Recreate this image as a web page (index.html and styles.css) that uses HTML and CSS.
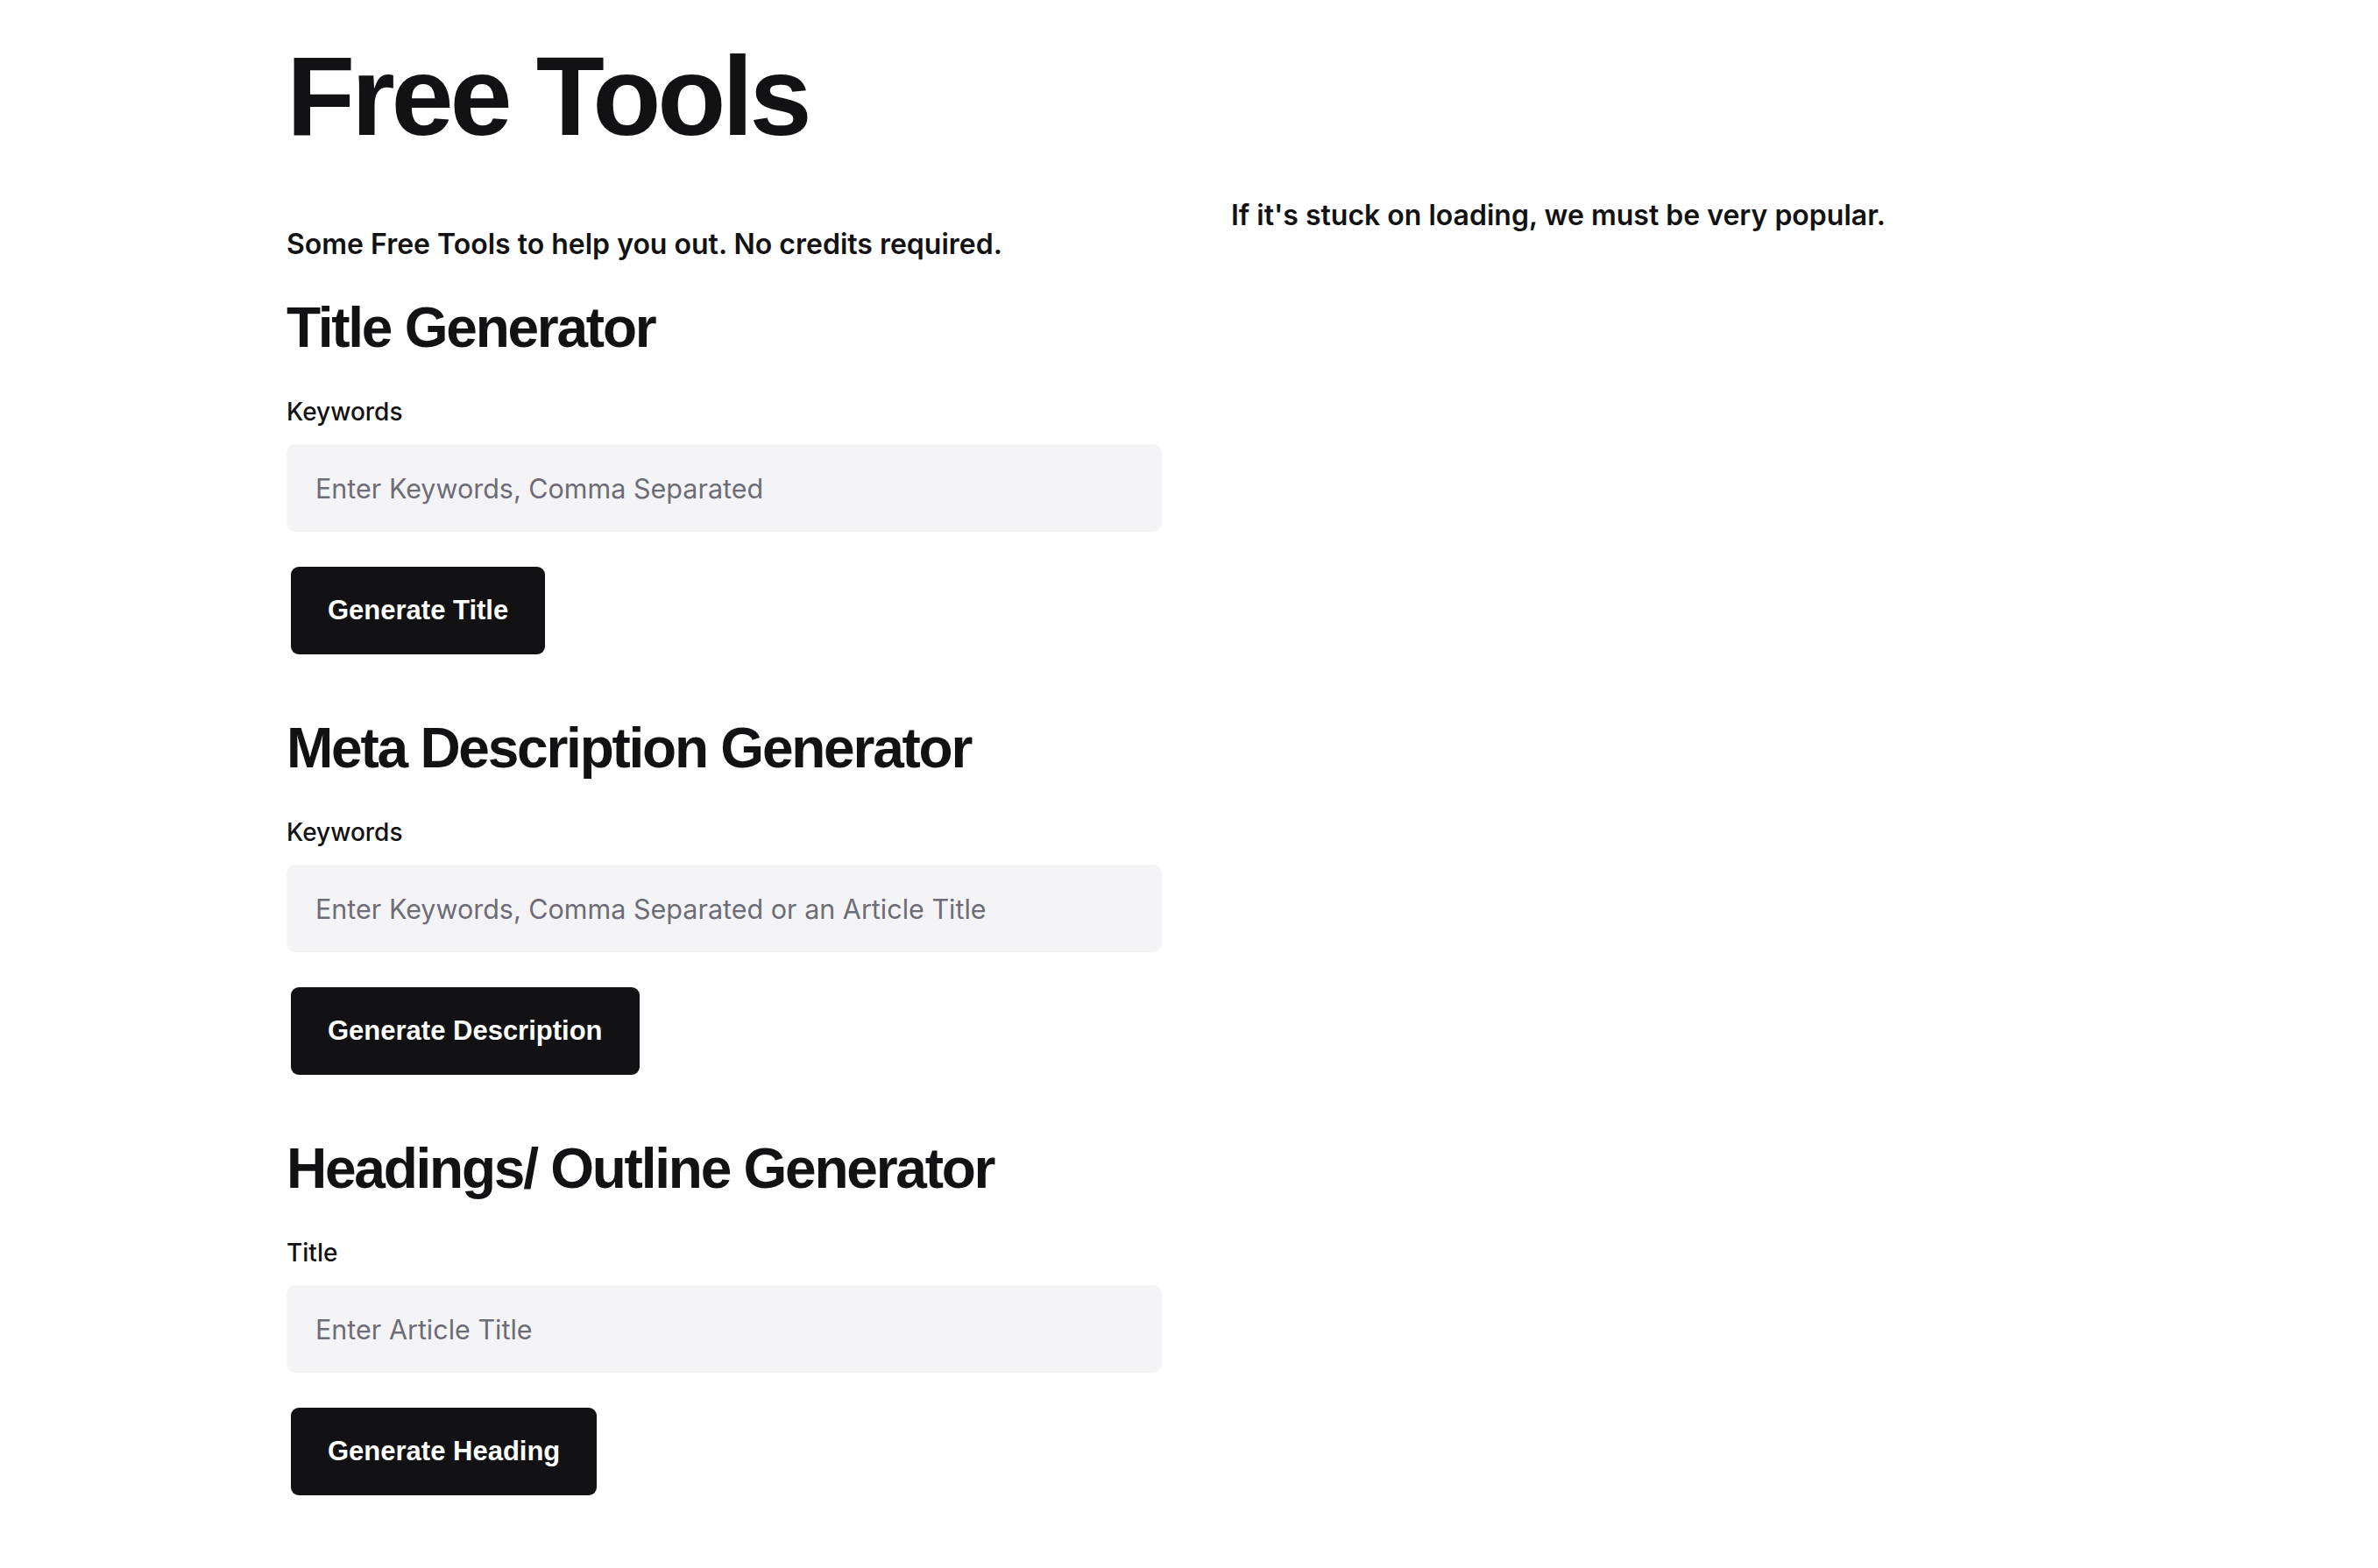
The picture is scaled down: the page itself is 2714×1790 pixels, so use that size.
FILE: index.html
```html
<!DOCTYPE html>
<html lang="en">
<head>
<meta charset="utf-8">
<title>Free Tools</title>
<link rel="stylesheet" href="styles.css">
</head>
<body>
<main class="page">
  <h1 class="page-title">Free Tools</h1>
  <div class="columns">
    <div class="tools">
      <p class="intro">Some Free Tools to help you out. No credits required.</p>

      <section class="tool">
        <h2 class="tool-title">Title Generator</h2>
        <label class="field-label" for="kw1">Keywords</label>
        <input class="field-input" id="kw1" type="text" placeholder="Enter Keywords, Comma Separated">
        <button class="btn" type="button">Generate Title</button>
      </section>

      <section class="tool">
        <h2 class="tool-title">Meta Description Generator</h2>
        <label class="field-label" for="kw2">Keywords</label>
        <input class="field-input" id="kw2" type="text" placeholder="Enter Keywords, Comma Separated or an Article Title">
        <button class="btn" type="button">Generate Description</button>
      </section>

      <section class="tool">
        <h2 class="tool-title">Headings/ Outline Generator</h2>
        <label class="field-label" for="kw3">Title</label>
        <input class="field-input" id="kw3" type="text" placeholder="Enter Article Title">
        <button class="btn" type="button">Generate Heading</button>
      </section>
    </div>
    <aside class="note">
      <p class="note-text">If it's stuck on loading, we must be very popular.</p>
    </aside>
  </div>
</main>
</body>
</html>
```

FILE: styles.css
```css
* {
  box-sizing: border-box;
}

html, body {
  margin: 0;
  padding: 0;
  background: #ffffff;
}

body {
  font-family: Inter, "Noto Sans", sans-serif;
  color: #121214;
}

.page {
  padding: 46px 0 60px 327px;
}

.page-title {
  margin: 0;
  font-family: "Liberation Sans", Arial, sans-serif;
  font-weight: 700;
  font-size: 128px;
  line-height: 128px;
  letter-spacing: -0.033em;
  color: #121214;
}

.columns {
  display: flex;
  align-items: flex-start;
  gap: 79px;
}

.tools {
  width: 999px;
  flex: none;
  padding-top: 85px;
}

.intro {
  margin: 0;
  font-size: 32px;
  line-height: 40px;
  font-weight: 600;
  color: #121214;
}

.tool {
  display: flex;
  flex-direction: column;
  align-items: flex-start;
}

.intro + .tool {
  margin-top: 35px;
}

.tool + .tool {
  margin-top: 67px;
}

.tool-title {
  margin: 0;
  font-family: "Liberation Sans", Arial, sans-serif;
  font-weight: 700;
  font-size: 64px;
  line-height: 80px;
  letter-spacing: -0.035em;
  color: #121214;
}

.field-label {
  margin-top: 40px;
  font-size: 28px;
  line-height: 32px;
  font-weight: 500;
  color: #121214;
}

.field-input {
  margin-top: 21px;
  width: 100%;
  height: 100px;
  padding: 0 33px;
  border: none;
  border-radius: 10px;
  background: #f4f4f6;
  font-family: Inter, "Noto Sans", sans-serif;
  font-size: 30.5px;
  color: #121214;
  outline: none;
}

.field-input::placeholder {
  color: #6d6d78;
  opacity: 1;
}

.btn {
  margin-top: 40px;
  margin-left: 5px;
  height: 100px;
  padding: 0 42px;
  border: none;
  border-radius: 9px;
  background: #121214;
  color: #ffffff;
  font-family: "Liberation Sans", Arial, sans-serif;
  font-weight: 700;
  font-size: 31px;
  cursor: pointer;
}

.note {
  padding-top: 52px;
}

.note-text {
  margin: 0;
  font-size: 32px;
  line-height: 40px;
  font-weight: 600;
  color: #121214;
}
```
